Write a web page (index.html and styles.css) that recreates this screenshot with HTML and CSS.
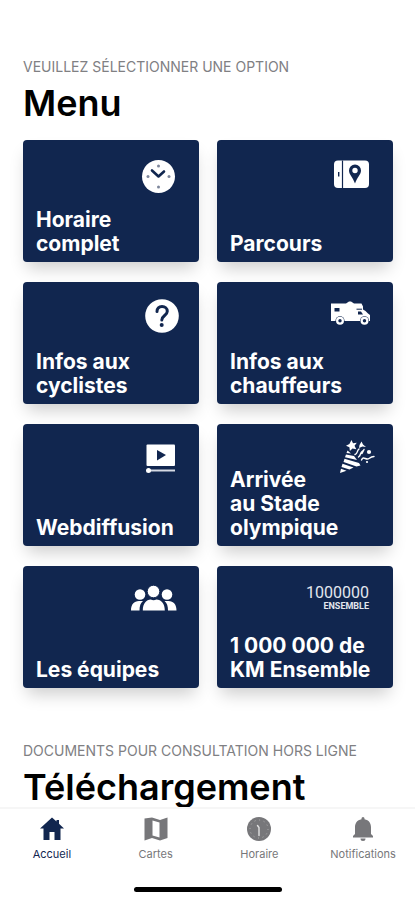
FILE: index.html
```html
<!DOCTYPE html>
<html lang="fr">
<head>
<meta charset="utf-8">
<meta name="viewport" content="width=device-width, initial-scale=1">
<title>Menu</title>
<link rel="stylesheet" href="styles.css">
</head>
<body>
<main class="content">
  <section class="section">
    <p class="eyebrow">VEUILLEZ SÉLECTIONNER UNE OPTION</p>
    <h1 class="title">Menu</h1>
    <div class="grid">
      <a class="card" href="#horaire">
        <svg class="card-icon" viewBox="0 0 72 38" aria-hidden="true">
          <circle cx="49.5" cy="20.5" r="16.5" fill="#fff"/>
          <path d="M43 14.5l6.5 6 5.500-5" fill="none" stroke="#11264f" stroke-width="2.600" stroke-linecap="round" stroke-linejoin="round"/>
          <g fill="#7d869b"><circle cx="49.500" cy="10" r="1.500"/><circle cx="49.500" cy="31" r="1.500"/><circle cx="39" cy="20.500" r="1.500"/><circle cx="60" cy="20.500" r="1.500"/></g>
        </svg>
        <span class="card-label">Horaire<br>complet</span>
      </a>
      <a class="card" href="#parcours">
        <svg class="card-icon" viewBox="0 0 72 38" aria-hidden="true">
          <rect x="31" y="4.500" width="35" height="27.500" rx="4" fill="#fff"/>
          <path d="M39.500 4.500v27.500" stroke="#11264f" stroke-width="1.200"/>
          <path d="M35.700 16v4.500" stroke="#11264f" stroke-width="1.400"/>
          <path fill-rule="evenodd" d="M52 8.500a6 6 0 0 0-6 6c0 4 4 7 6 13 2-6 6-9 6-13a6 6 0 0 0-6-6zm0 3.300a2.700 2.700 0 1 1 0 5.400 2.700 2.700 0 0 1 0-5.400z" fill="#11264f"/>
        </svg>
        <span class="card-label">Parcours</span>
      </a>
      <a class="card" href="#cyclistes">
        <svg class="card-icon" viewBox="0 0 72 38" aria-hidden="true">
          <circle cx="53" cy="18" r="16.800" fill="#fff"/>
          <path d="M48 13.500c0-3 2-5 5-5s5.300 2 5.300 4.800c0 4.200-5.500 4.200-5.500 8.700" fill="none" stroke="#11264f" stroke-width="3" stroke-linecap="round"/>
          <circle cx="52.700" cy="27" r="2" fill="#11264f"/>
        </svg>
        <span class="card-label">Infos aux<br>cyclistes</span>
      </a>
      <a class="card" href="#chauffeurs">
        <svg class="card-icon" viewBox="0 0 72 38" aria-hidden="true">
          <path d="M28 5.500h15l3-2h2l3 2h7.500l1.500 3v3l2.500 1.500 2.500 2.500 2 1.500v6h-39z" fill="#fff"/>
          <rect x="31.500" y="10" width="5" height="3.500" fill="#11264f"/>
          <path d="M53.500 11.200h5.500" stroke="#11264f" stroke-width="1"/>
          <path d="M55 13.500h3l2 3H55z" fill="#11264f"/>
          <circle cx="37" cy="22.800" r="4.500" fill="#11264f"/><circle cx="37" cy="22.800" r="4" fill="#fff"/><circle cx="37" cy="22.800" r="1.700" fill="#11264f"/>
          <circle cx="61.500" cy="22.800" r="4.500" fill="#11264f"/><circle cx="61.500" cy="22.800" r="4" fill="#fff"/><circle cx="61.500" cy="22.800" r="1.700" fill="#11264f"/>
        </svg>
        <span class="card-label">Infos aux<br>chauffeurs</span>
      </a>
      <a class="card" href="#webdiffusion">
        <svg class="card-icon" viewBox="0 0 72 38" aria-hidden="true">
          <rect x="37.500" y="4.500" width="28.500" height="21.500" rx="1" fill="#fff"/>
          <path d="M48 10l9 5-9 5.500z" fill="#11264f"/>
          <path d="M39 30.500h27" stroke="#d5d9e3" stroke-width="2"/>
          <circle cx="39.500" cy="30.500" r="2.500" fill="#fff"/>
        </svg>
        <span class="card-label">Webdiffusion</span>
      </a>
      <a class="card" href="#arrivee">
        <svg class="card-icon" viewBox="0 0 72 38" aria-hidden="true">
          <g fill="#fff">
            <path d="M44.500 10.500l3.500 3-4.500-.500zM43 14.500l8 1.500 3 4-12-2.800zM41.500 18.800l14.500 4.200 1.500 2.500-4 1-13-4.500zM39.500 23.800l11 3.700-4 2-8-2.500zM38 28.700l5.500 2-6.500 2.300z"/>
            <path d="M48.500 0l1.500 3.200 3.800-.400-2.300 3 1.800 3.400-3.800-.700-2.600 2.500-.500-3.700-3.400-1.600 3.400-1.700z"/>
            <path d="M58.500 1.500l1.500 3 3 2.500-3.500-.500-3.500 1.500.500-3z"/>
            <circle cx="66" cy="12" r="2.100"/><circle cx="64" cy="22" r="1.100"/>
          </g>
          <path d="M52 14.500c3-1 1.500-3.500 4-5.500M55.500 17c3-2 1-4 4-6M61 9.500l-2 4M58.500 20c2-5 4.500 1 7.500-1.500 2-1.500 3-2 5-2" fill="none" stroke="#fff" stroke-width="1.400" stroke-linecap="round"/>
        </svg>
        <span class="card-label">Arrivée<br>au Stade<br>olympique</span>
      </a>
      <a class="card" href="#equipes">
        <svg class="card-icon" viewBox="0 0 72 38" aria-hidden="true">
          <g fill="#fff">
            <circle cx="31" cy="12.500" r="5.300"/><circle cx="58" cy="12.500" r="5.300"/>
            <path d="M22 28.500c0-6 3-9.500 8-9.500h4c-2.500 2-3.500 5-3.500 9.500zM67.500 28.500c0-6-3-9.500-8-9.500h-4c2.500 2 3.500 5 3.500 9.500z"/>
          </g>
          <circle cx="44.500" cy="9.500" r="6.300" fill="#fff" stroke="#11264f"/>
          <path d="M33.800 28.500c0-7 3.500-11 8-11 1.500 1 4 1 5.500 0 5 0 8.500 4 8.500 11z" fill="#fff"/>
        </svg>
        <span class="card-label">Les équipes</span>
      </a>
      <a class="card" href="#ensemble">
        <span class="card-logo"><span class="logo-number">1000000</span><span class="logo-word">ENSEMBLE</span></span>
        <span class="card-label">1 000 000 de<br>KM Ensemble</span>
      </a>
    </div>
  </section>
  <section class="section downloads">
    <p class="eyebrow">DOCUMENTS POUR CONSULTATION HORS LIGNE</p>
    <h2 class="title">Téléchargement</h2>
  </section>
</main>
<footer class="bottom">
  <nav class="tabs">
    <a class="tab active" href="#accueil" aria-current="page">
      <svg class="tab-icon" viewBox="0 0 24 24" aria-hidden="true"><path d="M12 0.500L16.500 4.500V3H19V6.700L24 11.500H20.500V23H14.500V15H9.500V23H3.500V11.500H0z" fill="currentColor"/></svg>
      <span>Accueil</span>
    </a>
    <a class="tab" href="#cartes">
      <svg class="tab-icon" viewBox="0 0 24 24" aria-hidden="true"><path fill-rule="evenodd" d="M.500 1.500L8 .500 16 3l7.500-2.500V21L16 23.500 8 21 .500 23.500zM8.500 3.500V18.500L15.500 20.500V5.500z" fill="currentColor"/></svg>
      <span>Cartes</span>
    </a>
    <a class="tab" href="#horaire">
      <svg class="tab-icon" viewBox="0 0 24 24" aria-hidden="true"><circle cx="12" cy="12" r="12" fill="currentColor"/><path d="M10.500 8.500l1.500 2v8" fill="none" stroke="#e2e2e2" stroke-width="1.400" stroke-linecap="round"/><circle cx="12" cy="12" r="9" fill="none" stroke="#b5b5b5" stroke-dasharray="1 3.700"/></svg>
      <span>Horaire</span>
    </a>
    <a class="tab" href="#notifications">
      <svg class="tab-icon" viewBox="0 0 24 24" aria-hidden="true"><path d="M10.500 2.200V1.500a1.500 1.500 0 0 1 3 0v.700c4.500.800 6.500 4 6.500 8V17l2 2v1.500H2V19l2-2v-6.800c0-4 2-7.200 6.500-8zM9.500 21.500h5a2.500 2.500 0 0 1-5 0z" fill="currentColor"/></svg>
      <span>Notifications</span>
    </a>
  </nav>
  <div class="home-indicator"></div>
</footer>
</body>
</html>
```
FILE: styles.css
```css
* {
  box-sizing: border-box;
}

body {
  margin: 0;
  height: 100vh;
  display: flex;
  flex-direction: column;
  background: #fff;
  color: #000;
  font-family: Inter, "Liberation Sans", sans-serif;
}

a {
  color: inherit;
  text-decoration: none;
}

.content {
  flex: 1;
  min-height: 0;
  overflow-y: auto;
  scrollbar-width: none;
  padding-top: 57px;
}

.section {
  padding: 0 22px 0 23px;
}

.downloads {
  padding-top: 53px;
}

.eyebrow {
  margin: 0;
  font-size: 14px;
  line-height: 20px;
  color: #808083;
  white-space: nowrap;
}

.title {
  margin: 4px 0 0;
  font-size: 36px;
  line-height: 44px;
  font-weight: 600;
}

.grid {
  display: grid;
  grid-template-columns: 1fr 1fr;
  gap: 20px 18px;
  margin-top: 15px;
}

.card {
  display: flex;
  flex-direction: column;
  justify-content: space-between;
  height: 122px;
  padding: 16px 18px 6px 13px;
  border-radius: 4px;
  background: #11264f;
  color: #fff;
  box-shadow: 0 10px 16px -4px rgba(0, 0, 0, 0.2);
}

.card-icon {
  align-self: flex-end;
  flex: none;
  width: 72px;
  height: 38px;
}

.card-label {
  margin-top: -16px;
  font-size: 21px;
  line-height: 24px;
  font-weight: 700;
  white-space: nowrap;
}

.card-logo {
  align-self: flex-end;
  display: flex;
  flex-direction: column;
  align-items: flex-end;
  height: 38px;
  padding: 3px 6px 0 0;
  font-family: Roboto, "Liberation Sans", sans-serif;
  color: #e3e6ee;
}

.logo-number {
  font-size: 16px;
  line-height: 16px;
}

.logo-word {
  font-size: 9px;
  line-height: 10px;
  font-weight: 700;
}

.bottom {
  flex: none;
  border-top: 2px solid #f6f6f6;
  padding: 8px 0 8px;
  background: #fff;
}

.tabs {
  display: grid;
  grid-template-columns: repeat(4, 1fr);
}

.tab {
  display: flex;
  flex-direction: column;
  align-items: center;
  gap: 6px;
  font-size: 11px;
  line-height: 14px;
  color: #77777a;
}

.active {
  color: #11264f;
}

.tab-icon {
  width: 24px;
  height: 24px;
}

.home-indicator {
  width: 148px;
  height: 5px;
  margin: 26px auto 0;
  border-radius: 3px;
  background: #000;
}
```
